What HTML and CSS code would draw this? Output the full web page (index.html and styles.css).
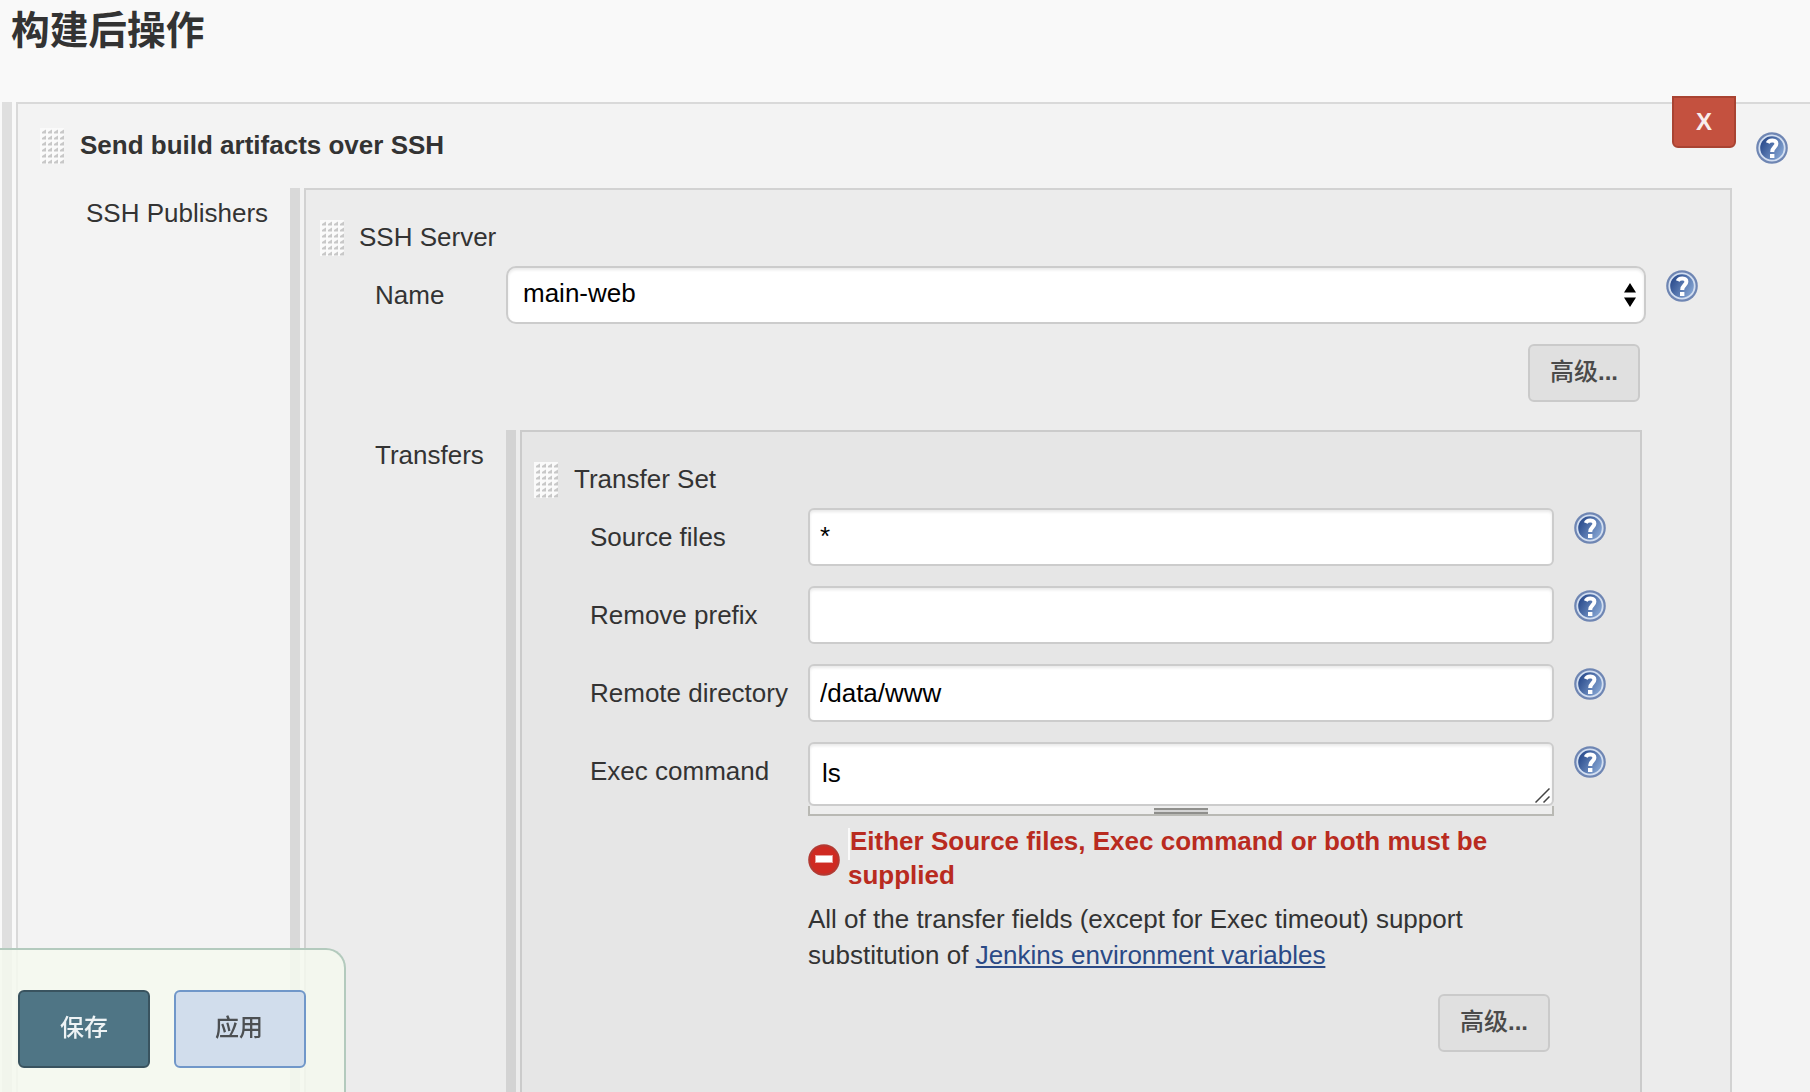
FILE: index.html
```html
<!DOCTYPE html>
<html lang="zh-CN">
<head>
<meta charset="utf-8">
<title>构建后操作</title>
<link rel="stylesheet" href="styles.css">
</head>
<body>
<svg class="defs" width="0" height="0" aria-hidden="true">
  <defs>
    <linearGradient id="helpFill" x1="0" y1="0.2" x2="1" y2="0.8">
      <stop offset="0.1" stop-color="#2f5090"/>
      <stop offset="0.9" stop-color="#7f9fce"/>
    </linearGradient>
    <pattern id="dots" width="6" height="6" patternUnits="userSpaceOnUse">
      <rect width="6" height="6" fill="#fafafa"/>
      <path d="M6 1.600V5.600H2V4Z" fill="#c8c8c8"/>
    </pattern>
    <symbol id="help" viewBox="0 0 32 32">
      <circle cx="16" cy="16" r="15.8" fill="#6f86b3"/>
      <circle cx="16" cy="16" r="13.6" fill="#d3dff1"/>
      <circle cx="16" cy="16" r="11.8" fill="url(#helpFill)"/>
      <path d="M11.800 11C13 7.600 20.400 7.400 20.400 11.800C20.400 15 16.200 15.200 16.200 20" fill="none" stroke="#fff" stroke-width="4"/>
      <rect x="14" y="22" width="4.400" height="4" fill="#fff"/>
    </symbol>
    <symbol id="grip" viewBox="0 0 24 36"><rect width="24" height="36" fill="url(#dots)"/></symbol>
  </defs>
</svg>

<h1 class="section-title">构建后操作</h1>

<div class="chunk chunk-outer">
  <div class="bar"></div>
  <section class="panel">
    <header class="panel-head">
      <svg class="grip"><use href="#grip"/></svg>
      <b class="panel-title">Send build artifacts over SSH</b>
      <button class="close">X</button>
      <svg class="help"><use href="#help"/></svg>
    </header>
    <div class="field-row">
      <div class="label">SSH Publishers</div>
      <div class="chunk chunk-server">
        <div class="bar"></div>
        <section class="panel">
          <header class="panel-head">
            <svg class="grip"><use href="#grip"/></svg>
            <span class="panel-title">SSH Server</span>
          </header>
          <div class="field-row field-name">
            <div class="label">Name</div>
            <div class="select">
              <span>main-web</span>
              <svg width="12" height="24" viewBox="0 0 12 24"><path d="M6 0L12 9.500H0ZM6 24L12 14.500H0Z"/></svg>
            </div>
            <svg class="help"><use href="#help"/></svg>
          </div>
          <div class="advanced-row"><button class="advanced">高级<b>...</b></button></div>
          <div class="field-row">
            <div class="label">Transfers</div>
            <div class="chunk chunk-transfer">
              <div class="bar"></div>
              <section class="panel">
                <header class="panel-head">
                  <svg class="grip"><use href="#grip"/></svg>
                  <span class="panel-title">Transfer Set</span>
                </header>
                <div class="field-row">
                  <div class="label">Source files</div>
                  <input class="text" type="text" value="*">
                  <svg class="help"><use href="#help"/></svg>
                </div>
                <div class="field-row">
                  <div class="label">Remove prefix</div>
                  <input class="text" type="text">
                  <svg class="help"><use href="#help"/></svg>
                </div>
                <div class="field-row">
                  <div class="label">Remote directory</div>
                  <input class="text path" type="text" value="/data/www">
                  <svg class="help"><use href="#help"/></svg>
                </div>
                <div class="field-row field-exec">
                  <div class="label">Exec command</div>
                  <div class="exec">
                    <div class="textarea">
                      <span>ls</span>
                      <svg width="15" height="15" viewBox="0 0 15 15"><path d="M0.500 14.500L14.500 0.500M8.500 14.500L14.500 8.500"/></svg>
                    </div>
                    <div class="resizer"><i></i></div>
                    <div class="error">
                      <svg width="32" height="32" viewBox="0 0 32 32">
                        <circle cx="16" cy="16" r="15.800" fill="#b23a33"/>
                        <circle cx="16" cy="16" r="13.800" fill="#cf2a22"/>
                        <rect x="7.500" y="11.500" width="17" height="7" fill="#fff" stroke="#e9a09c"/>
                      </svg>
                      <p><i></i>Either Source files, Exec command or both must be<br>supplied</p>
                    </div>
                    <p class="note">All of the transfer fields (except for Exec timeout) support<br>substitution of <a href="#">Jenkins environment variables</a></p>
                  </div>
                  <svg class="help"><use href="#help"/></svg>
                </div>
                <div class="advanced-row"><button class="advanced">高级<b>...</b></button></div>
              </section>
            </div>
          </div>
        </section>
      </div>
    </div>
  </section>
</div>

<div class="sticker">
  <button class="save">保存</button>
  <button class="apply">应用</button>
</div>
</body>
</html>
```
FILE: styles.css
```css
* { box-sizing: border-box; }

html, body { height: 100%; }

body {
  margin: 0;
  overflow: hidden;
  background: #f9f9f9;
  color: #333;
  font: 26px/36px "Liberation Sans", "Noto Sans CJK SC", sans-serif;
}

svg { display: block; flex: none; }
.defs { position: absolute; }

.section-title {
  height: 102px;
  margin: 0;
  padding: 3px 0 0 11px;
  font-size: 38.7px;
  line-height: 56px;
  font-weight: 700;
}

/* nested blocks: grey drag bar plus bordered panel */
.chunk { display: flex; gap: 4px; flex: none; }
.bar { width: 10px; flex: none; }
.panel { flex: 1; border: 2px solid; border-bottom: 0; }
.panel-head { display: flex; align-items: flex-start; }
.grip { width: 24px; height: 36px; }
.help { width: 32px; height: 32px; }
.field-row { display: flex; align-items: flex-start; }
.label { flex: none; white-space: nowrap; }

.chunk-outer { width: 1830px; height: 990px; margin-left: 2px; }
.chunk-outer > .bar { background: #dfdfdf; }
.chunk-outer > .panel { background: #f3f3f3; border-color: #d9d9d9; }
.chunk-outer > .panel > .panel-head { position: relative; height: 84px; padding: 24px 0 0 22px; }
.chunk-outer > .panel > .panel-head .panel-title { width: 1000px; margin: -1px 0 0 16px; }
.chunk-outer > .panel > .panel-head .help { margin: 4px 0 0 676px; }
.chunk-outer > .panel > .field-row > .label { width: 272px; padding: 7px 0 0 68px; }

.chunk-server { width: 1442px; height: 904px; }
.chunk-server > .bar { background: #d9d9d9; }
.chunk-server > .panel { background: #ececec; border-color: #d2d2d2; }
.chunk-server > .panel > .panel-head { height: 76px; padding: 30px 0 0 14px; }
.chunk-server > .panel > .panel-head .panel-title { margin: -1px 0 0 15px; }
.chunk-server > .panel > .field-row > .label { width: 200px; padding: 7px 0 0 69px; }
.chunk-server > .panel > .field-name > .label { padding-top: 11px; }
.chunk-server > .panel > .advanced-row { padding: 20px 90px 28px 0; }

.chunk-transfer { width: 1136px; height: 662px; }
.chunk-transfer > .bar { background: #d3d3d3; }
.chunk-transfer > .panel { background: #e6e6e6; border-color: #cbcbcb; }
.chunk-transfer > .panel > .panel-head { height: 76px; padding: 30px 0 0 12px; }
.chunk-transfer > .panel > .panel-head .panel-title { margin: -1px 0 0 16px; }
.chunk-transfer > .panel > .field-row { height: 78px; }
.chunk-transfer > .panel > .field-exec { height: 252px; }
.chunk-transfer > .panel > .field-row > .label { width: 286px; padding: 11px 0 0 68px; }
.chunk-transfer > .panel > .advanced-row { padding-right: 90px; }

.field-row > .help { margin: 4px 0 0 20px; }

.close {
  position: absolute;
  left: 1654px;
  top: -8px;
  width: 64px;
  height: 52px;
  padding: 0;
  border: 2px solid #a94332;
  border-radius: 0 0 6px 6px;
  background: #c4513f;
  color: #f8eeec;
  font: bold 24px/48px "Liberation Sans", sans-serif;
}

.select, .text, .textarea {
  border: 2px solid #ccc;
  background: #fff;
  box-shadow: inset 0 2px 3px rgba(0, 0, 0, .09);
  color: #000;
}
.select {
  display: flex;
  justify-content: space-between;
  width: 1140px;
  height: 58px;
  padding: 7px 8px 0 15px;
  border-radius: 10px;
}
.select svg { margin-top: 8px; }
.text {
  width: 746px;
  height: 58px;
  padding: 0 10px 1px;
  border-radius: 6px;
  outline: 0;
  font: 26px/36px "Liberation Sans", sans-serif;
}
.text.path { padding: 1px 10px 0; }
.exec { width: 746px; flex: none; }
.textarea {
  display: flex;
  justify-content: space-between;
  height: 64px;
  padding: 11px 2px 0 12px;
  border-radius: 6px;
}
.textarea svg { margin-top: 33px; fill: none; stroke: #444; stroke-width: 1.5; }

.resizer {
  height: 10px;
  padding-top: 2px;
  border: solid #b9b9b4;
  border-width: 0 2px 2px;
  background: #eee;
}
.resizer i {
  display: block;
  width: 54px;
  height: 6px;
  margin: 0 auto;
  border: solid #8f8f8c;
  border-width: 2px 0;
  background: #d4d4d4;
}

.error {
  display: flex;
  gap: 8px;
  padding-top: 8px;
  color: #b92b20;
  font-weight: 700;
  line-height: 34px;
}
.error svg { margin-top: 20px; }
.error p { margin: 0; white-space: nowrap; }
.error i {
  display: inline-block;
  width: 2px;
  height: 32px;
  margin-bottom: -10px;
  vertical-align: baseline;
  background: #fafafa;
}
.note { margin: 9px 0 0; white-space: nowrap; }
.note a { color: #2b4a86; text-decoration-thickness: 2px; text-underline-offset: 2px; }

.advanced-row { display: flex; justify-content: flex-end; }
.advanced {
  width: 112px;
  height: 58px;
  padding: 0 0 2px;
  border: 2px solid #cacaca;
  border-radius: 6px;
  background: #e0e0e0;
  color: #4a4a4a;
  font: 500 24px/50px "Liberation Sans", "Noto Sans CJK SC", sans-serif;
}

/* save bar floating over the form */
.sticker {
  position: fixed;
  left: -2px;
  bottom: 0;
  display: flex;
  gap: 24px;
  width: 348px;
  height: 144px;
  padding: 40px 0 0 20px;
  border: solid #b3cabd;
  border-width: 2px 2px 0 0;
  border-radius: 0 20px 0 0;
  background: rgba(245, 249, 239, .85);
}
.sticker button {
  width: 132px;
  height: 78px;
  padding: 0 0 6px;
  border: 2px solid;
  border-radius: 6px;
  font: 500 24px/60px "Noto Sans CJK SC", sans-serif;
}
.sticker .save { background: #4f7585; border-color: #39535f; color: #eef3f5; }
.sticker .apply { padding-right: 2px; background: #d1ddec; border-color: #7097c9; color: #4c4f52; }
```
